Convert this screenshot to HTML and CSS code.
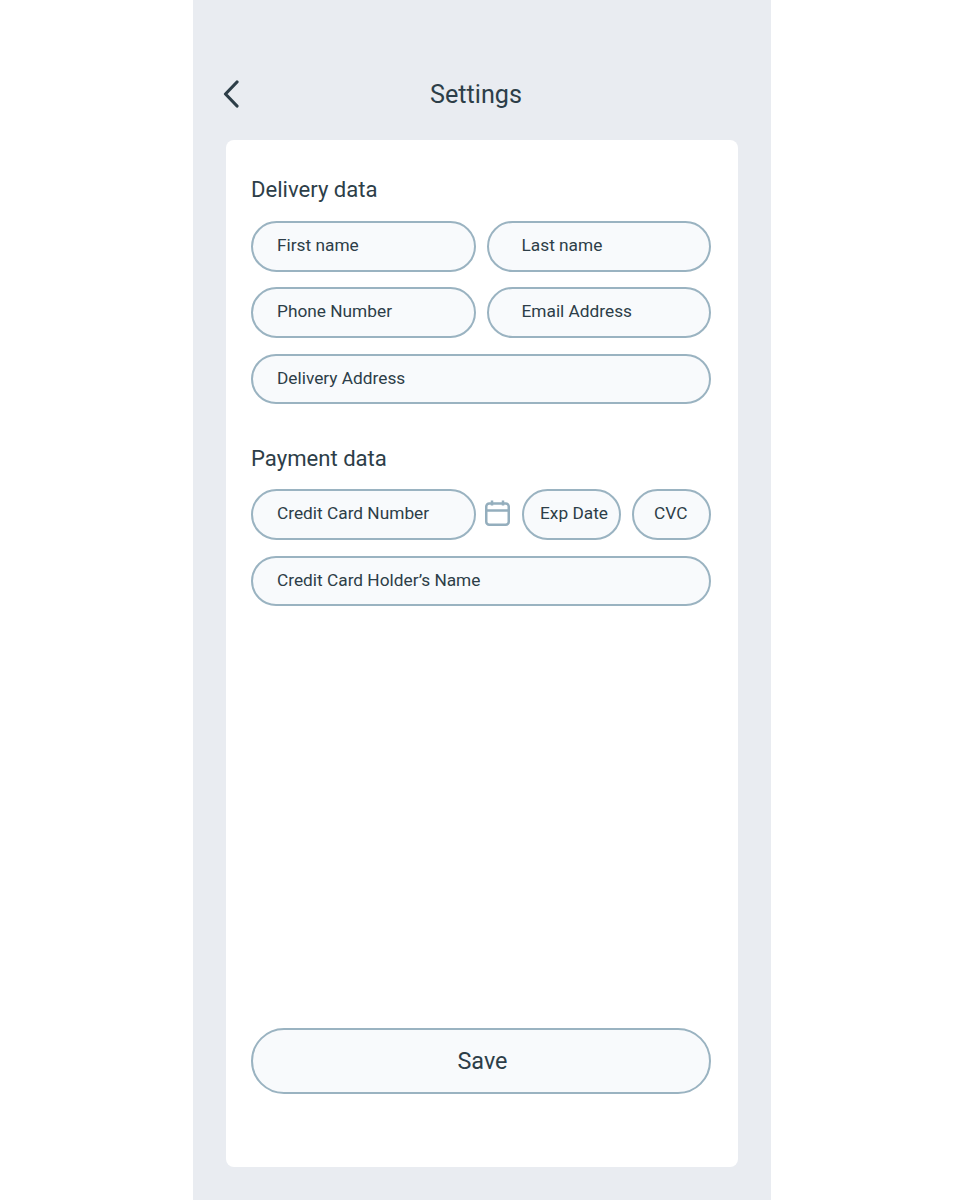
FILE: index.html
```html
<!DOCTYPE html>
<html lang="en">
<head>
    <meta charset="UTF-8">
    <meta name="viewport" content="width=device-width, initial-scale=1.0">
    <title>Settings</title>
    <link rel="stylesheet" href="styles.css">
</head>
<body>

    <div class="phone">
        <div class="header">
            <svg class="back" width="16" height="28" viewBox="0 0 16 28">
                <path d="M14 2 L2.5 14 L14 26" fill="none" stroke="#2d3e48" stroke-width="3.2" stroke-linecap="round" stroke-linejoin="round"/>
            </svg>
            <h1>Settings</h1>
        </div>

        <div class="card">
            <h2>Delivery data</h2>
            <div class="row">
                <div class="field half">First name</div>
                <div class="field half indent">Last name</div>
            </div>
            <div class="row">
                <div class="field half">Phone Number</div>
                <div class="field half indent">Email Address</div>
            </div>
            <div class="row">
                <div class="field wide">Delivery Address</div>
            </div>

            <h2 class="second">Payment data</h2>
            <div class="row">
                <div class="field half">Credit Card Number</div>
                <svg class="calendar" width="25" height="26" viewBox="0 0 25 26">
                    <rect x="1.25" y="3.5" width="22.5" height="21.25" rx="3" fill="none" stroke="#94aebd" stroke-width="2.5"/>
                    <path d="M1.25 10.5 H23.75 M7 0.5 V5.5 M18 0.5 V5.5" fill="none" stroke="#94aebd" stroke-width="2.5"/>
                </svg>
                <div class="field exp">Exp Date</div>
                <div class="field cvc">CVC</div>
            </div>
            <div class="row">
                <div class="field wide">Credit Card Holder’s Name</div>
            </div>

            <button class="save">Save</button>
        </div>
    </div>

</body>
</html>
```
FILE: styles.css
```css
body {
    font-family: Roboto, Arial, sans-serif;
    background-color: white;
    color: #2d3e48;
    margin: 0;
}

.phone {
    background-color: #e9ecf1;
    width: 578px;
    height: 1200px;
    margin-left: 193px;
    padding: 0 33px;
    box-sizing: border-box;
}

.header {
    display: flex;
    align-items: center;
    height: 140px;
    padding-top: 48px;
    box-sizing: border-box;
    position: relative;
}

.back {
    margin-left: -3px;
}

h1 {
    font-size: 25.2px;
    font-weight: 400;
    margin: 0 0 0 204px;
    position: absolute;
    left: 0;
}

.card {
    background-color: white;
    border-radius: 8px;
    width: 512px;
    height: 1027px;
    padding: 35px 27px 0 25px;
    box-sizing: border-box;
}

h2 {
    font-size: 22.1px;
    font-weight: 400;
    line-height: 28px;
    margin: 0 0 18px;
}

h2.second {
    margin-top: 40.3px;
    margin-bottom: 17px;
}

.row {
    display: flex;
    align-items: center;
    margin-bottom: 15.8px;
}

.field {
    height: 50.5px;
    border: 2px solid #9ab3c1;
    border-radius: 26px;
    background-color: #f8fafc;
    box-sizing: border-box;
    font-size: 17.3px;
    line-height: 44px;
    padding-left: 24px;
}

.half {
    width: 225px;
}

.indent {
    width: 224px;
    margin-left: 11px;
    padding-left: 32.5px;
}

.wide {
    width: 460px;
}

.calendar {
    margin: 0 12px 4px 9px;
}

.exp {
    width: 99px;
    padding-left: 16px;
}

.cvc {
    width: 79px;
    margin-left: 11px;
    padding-left: 20px;
}

.save {
    display: block;
    width: 460px;
    height: 66px;
    margin-top: 421.8px;
    padding-left: 9px;
    border: 2px solid #9ab3c1;
    border-radius: 33px;
    background-color: #f8fafc;
    color: #2d3e48;
    font-family: Roboto, Arial, sans-serif;
    font-size: 23.4px;
}
```
